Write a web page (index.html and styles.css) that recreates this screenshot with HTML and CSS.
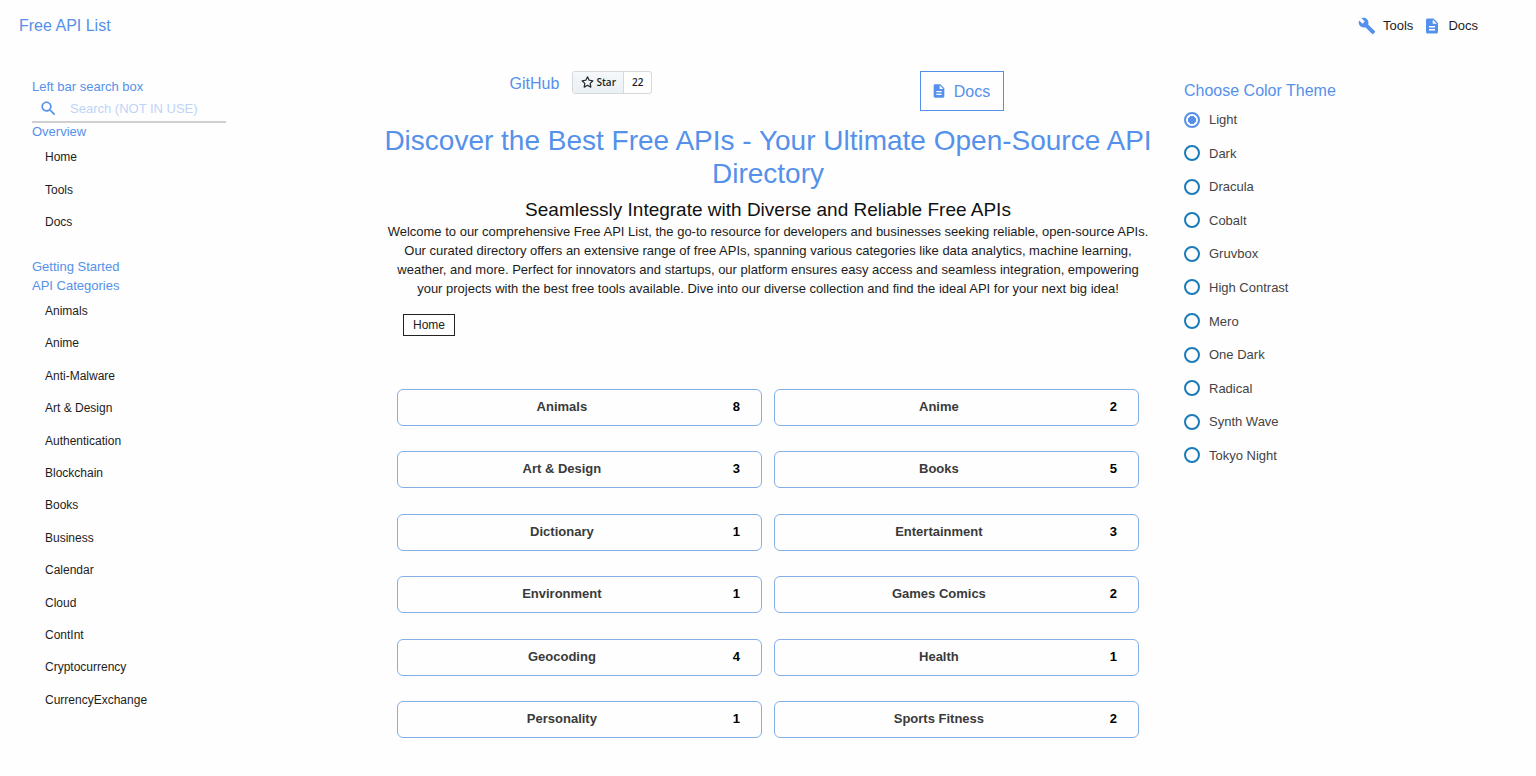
FILE: index.html
```html
<!DOCTYPE html>
<html lang="en">
<head>
<meta charset="utf-8">
<title>Free API List</title>
<link rel="stylesheet" href="styles.css">
</head>
<body>
<svg class="sprite" aria-hidden="true">
  <symbol id="doc" viewBox="0 0 24 24"><path d="M14 2H6c-1.100 0-1.990.9-1.990 2L4 20c0 1.100.89 2 1.990 2H18c1.100 0 2-.9 2-2V8l-6-6zm2 16H8v-2h8v2zm0-4H8v-2h8v2zm-3-5V3.500L18.500 9H13z"/></symbol>
  <symbol id="wrench" viewBox="0 0 24 24"><path d="M22.700 19l-9.100-9.100c.9-2.300.4-5-1.500-6.900-2-2-5-2.400-7.400-1.300L9 6 6 9 1.600 4.700C.4 7.100.9 10.100 2.900 12.100c1.900 1.900 4.600 2.400 6.900 1.500l9.100 9.100c.4.4 1 .4 1.400 0l2.300-2.300c.5-.4.5-1.100.1-1.400z"/></symbol>
</svg>
<header class="topbar">
  <a class="brand" href="#">Free API List</a>
  <nav class="topnav">
    <a href="#"><svg class="icon"><use href="#wrench"/></svg>Tools</a>
    <a href="#"><svg class="icon"><use href="#doc"/></svg>Docs</a>
  </nav>
</header>
<div class="page">
  <aside class="sidebar">
    <label class="side-title" for="search">Left bar search box</label>
    <div class="search">
      <svg class="icon search-icon" viewBox="0 0 24 24"><path d="M15.500 14h-.79l-.28-.27C15.410 12.590 16 11.110 16 9.500 16 5.910 13.090 3 9.500 3S3 5.910 3 9.500 5.910 16 9.500 16c1.610 0 3.090-.59 4.230-1.570l.27.28v.79l5 4.990L20.490 19l-4.990-5zm-6 0C7.010 14 5 11.990 5 9.500S7.010 5 9.500 5 14 7.010 14 9.500 11.990 14 9.500 14z"/></svg>
      <input id="search" type="text" placeholder="Search (NOT IN USE)">
    </div>
    <h2 class="side-title">Overview</h2>
    <ul class="side-list overview">
      <li><a href="#">Home</a></li>
      <li><a href="#">Tools</a></li>
      <li><a href="#">Docs</a></li>
    </ul>
    <h2 class="side-title">Getting Started</h2>
    <h2 class="side-title">API Categories</h2>
    <ul class="side-list categories">
      <li><a href="#">Animals</a></li>
      <li><a href="#">Anime</a></li>
      <li><a href="#">Anti-Malware</a></li>
      <li><a href="#">Art &amp; Design</a></li>
      <li><a href="#">Authentication</a></li>
      <li><a href="#">Blockchain</a></li>
      <li><a href="#">Books</a></li>
      <li><a href="#">Business</a></li>
      <li><a href="#">Calendar</a></li>
      <li><a href="#">Cloud</a></li>
      <li><a href="#">ContInt</a></li>
      <li><a href="#">Cryptocurrency</a></li>
      <li><a href="#">CurrencyExchange</a></li>
    </ul>
  </aside>
  <main class="main">
    <div class="actions">
      <div class="github">
        <a class="github-link" href="#">GitHub</a>
        <div class="star">
          <a class="star-button" href="#"><svg class="star-icon" viewBox="0 0 16 16"><path d="M8 .25a.75.75 0 01.673.418l1.882 3.815 4.210.612a.75.75 0 01.416 1.279l-3.046 2.970.719 4.192a.75.75 0 01-1.088.791L8 12.347l-3.766 1.980a.75.75 0 01-1.088-.79l.72-4.194L.818 6.374a.75.75 0 01.416-1.280l4.210-.611L7.327.668A.75.75 0 018 .25zm0 2.445L6.615 5.500a.75.75 0 01-.564.410l-3.097.450 2.240 2.184a.75.75 0 01.216.664l-.528 3.084 2.769-1.456a.75.75 0 01.698 0l2.770 1.456-.530-3.084a.75.75 0 01.216-.664l2.240-2.183-3.096-.450a.75.75 0 01-.564-.410L8 2.694z"/></svg>Star</a>
          <a class="star-count" href="#">22</a>
        </div>
      </div>
      <div class="docs-cell">
        <a class="docs-button" href="#"><svg class="icon"><use href="#doc"/></svg>Docs</a>
      </div>
    </div>
    <h1>Discover the Best Free APIs - Your Ultimate Open-Source API Directory</h1>
    <h2 class="subtitle">Seamlessly Integrate with Diverse and Reliable Free APIs</h2>
    <p class="intro">Welcome to our comprehensive Free API List, the go-to resource for developers and businesses seeking reliable, open-source APIs. Our curated directory offers an extensive range of free APIs, spanning various categories like data analytics, machine learning, weather, and more. Perfect for innovators and startups, our platform ensures easy access and seamless integration, empowering your projects with the best free tools available. Dive into our diverse collection and find the ideal API for your next big idea!</p>
    <a class="crumb" href="#">Home</a>
    <div class="cards">
      <a class="card" href="#"><span>Animals</span><b>8</b></a>
      <a class="card" href="#"><span>Anime</span><b>2</b></a>
      <a class="card" href="#"><span>Art &amp; Design</span><b>3</b></a>
      <a class="card" href="#"><span>Books</span><b>5</b></a>
      <a class="card" href="#"><span>Dictionary</span><b>1</b></a>
      <a class="card" href="#"><span>Entertainment</span><b>3</b></a>
      <a class="card" href="#"><span>Environment</span><b>1</b></a>
      <a class="card" href="#"><span>Games Comics</span><b>2</b></a>
      <a class="card" href="#"><span>Geocoding</span><b>4</b></a>
      <a class="card" href="#"><span>Health</span><b>1</b></a>
      <a class="card" href="#"><span>Personality</span><b>1</b></a>
      <a class="card" href="#"><span>Sports Fitness</span><b>2</b></a>
    </div>
  </main>
  <fieldset class="themes">
    <legend>Choose Color Theme</legend>
    <div class="theme-list">
      <label><input type="radio" name="theme" checked>Light</label>
      <label><input type="radio" name="theme">Dark</label>
      <label><input type="radio" name="theme">Dracula</label>
      <label><input type="radio" name="theme">Cobalt</label>
      <label><input type="radio" name="theme">Gruvbox</label>
      <label><input type="radio" name="theme">High Contrast</label>
      <label><input type="radio" name="theme">Mero</label>
      <label><input type="radio" name="theme">One Dark</label>
      <label><input type="radio" name="theme">Radical</label>
      <label><input type="radio" name="theme">Synth Wave</label>
      <label><input type="radio" name="theme">Tokyo Night</label>
    </div>
  </fieldset>
</div>
</body>
</html>
```
FILE: styles.css
```css
:root {
  --accent: #5591ea;
  --radio: #1b7bb8;
  --line: #84b0e8;
}
* { box-sizing: border-box; margin: 0; padding: 0; }
body {
  font-family: Arial, "Liberation Sans", sans-serif;
  font-size: 13px;
  line-height: 19px;
  color: #1c1c1c;
  background: #fefefe;
}
a { color: inherit; text-decoration: none; }
ul { list-style: none; }
h1, h2 { font-weight: 400; }
.sprite { display: none; }
.icon { width: 18px; height: 18px; fill: var(--accent); flex: none; }
.search-icon { width: 19px; height: 19px; }

.topbar {
  display: flex;
  justify-content: space-between;
  align-items: center;
  height: 51px;
  padding: 0 58px 0 19px;
}
.brand { font-size: 16px; color: var(--accent); }
.topnav { display: flex; gap: 10px; }
.topnav a { display: flex; align-items: center; gap: 7px; }

.page {
  display: grid;
  grid-template-columns: 1fr 2fr 1fr;
  align-items: start;
}

.sidebar { padding: 26px 32px 0; }
.side-title { display: block; font-size: 13px; color: var(--accent); }
.search {
  display: flex;
  align-items: center;
  gap: 12px;
  width: 194px;
  height: 27px;
  margin-bottom: -1px;
  padding-left: 7px;
  border-bottom: 2px solid #cfcfcf;
}
.search input {
  flex: 1;
  min-width: 0;
  border: 0;
  outline: 0;
  background: none;
  font: inherit;
  color: var(--accent);
}
.search input::placeholder { color: #bfd5f7; opacity: 1; }
.side-list {
  display: flex;
  flex-direction: column;
  justify-content: space-between;
  padding-left: 13px;
  font-size: 12px;
}
.overview { min-height: 84px; margin: 7px 0 25px; }
.categories { min-height: 408px; margin-top: 7px; }

.main { padding-top: 20px; text-align: center; }
.actions { display: grid; grid-template-columns: 1fr 1fr; margin-left: 8px; }
.github { display: flex; justify-content: center; gap: 13px; padding-right: 2px; }
.github-link { font-size: 16px; line-height: 26px; color: var(--accent); }
.star {
  display: flex;
  height: 23px;
  font: 10px/21px "Open Sans", "Noto Sans", sans-serif;
  font-weight: 600;
  border: 1px solid #d5d8dc;
  border-radius: 3px;
  overflow: hidden;
}
.star-button {
  display: flex;
  align-items: center;
  gap: 2px;
  padding: 0 7px 0 8px;
  background: linear-gradient(#f6f8fa, #ebf0f4);
  border-right: 1px solid #d5d8dc;
}
.star-icon { width: 13px; height: 13px; fill: #24292f; }
.star-count { padding: 0 8px; }
.docs-button {
  display: inline-flex;
  align-items: center;
  gap: 7px;
  height: 40px;
  padding: 0 13px 0 10px;
  border: 1px solid var(--accent);
  font-size: 16px;
  color: var(--accent);
}
.docs-button .icon { width: 16px; height: 16px; }
.docs-cell { display: flex; justify-content: center; }
h1 { margin: 13px -8px 0; font-size: 28px; line-height: 33px; color: var(--accent); }
.subtitle { margin-top: 9px; font-size: 19px; line-height: 22px; color: #111; }
.intro { margin-top: 1px; }
.crumb {
  display: block;
  width: fit-content;
  margin: 16px 0 0 19px;
  padding: 0 9px;
  border: 1px solid #222;
  font-size: 12px;
  line-height: 20px;
}
.cards {
  display: grid;
  grid-template-columns: 1fr 1fr;
  column-gap: 12px;
  align-content: space-between;
  min-height: 349px;
  margin: 53px 13px 37px;
}
.card {
  display: flex;
  align-items: center;
  gap: 7px;
  height: 37px;
  padding: 0 21px 2px 0;
  border: 1px solid var(--line);
  border-radius: 6px;
  font-weight: 700;
  color: #3a3a3a;
}
.card span { flex: 1; }
.card b { color: #000; }

.themes { border: 0; padding: 30px 32px 0; color: #444; }
.themes legend { float: left; font-size: 16px; color: var(--accent); }
.theme-list {
  clear: both;
  display: flex;
  flex-direction: column;
  justify-content: space-between;
  min-height: 365px;
  padding-top: 10px;
}
.theme-list label { display: flex; align-items: center; gap: 9px; }
.theme-list input {
  appearance: none;
  width: 16px;
  height: 16px;
  border: 2px solid var(--radio);
  border-radius: 50%;
}
.theme-list input:checked {
  border-color: var(--accent);
  background: radial-gradient(circle, var(--accent) 4px, transparent 4px);
}
```
